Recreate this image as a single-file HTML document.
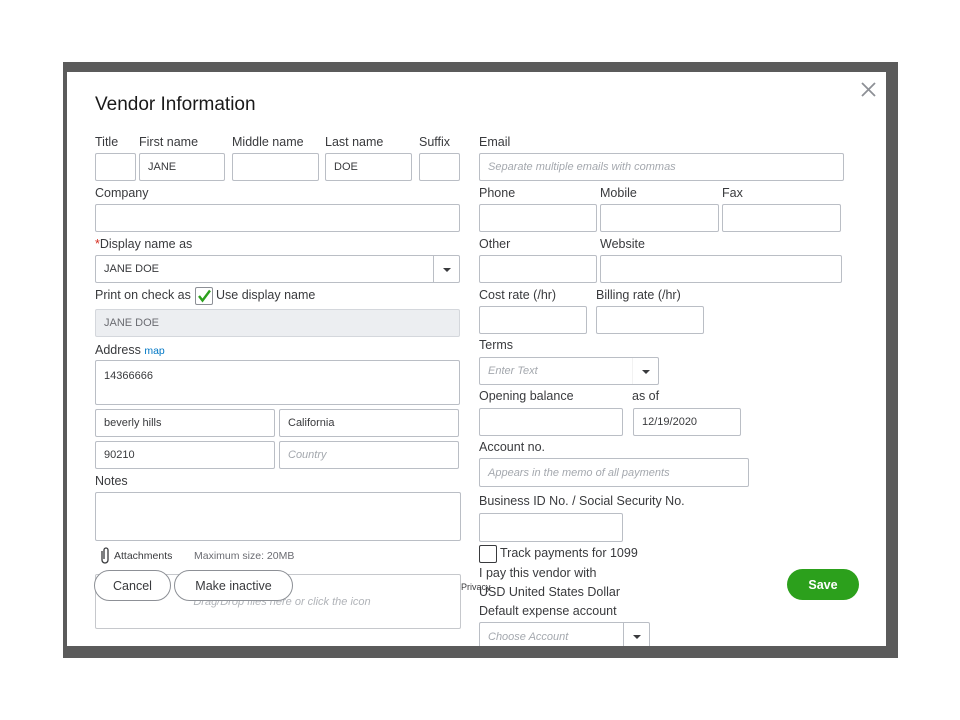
<!DOCTYPE html>
<html><head><meta charset="utf-8"><style>
*{box-sizing:border-box;margin:0;padding:0}
body{width:960px;height:720px;background:#fff;position:relative;overflow:hidden;font-family:"Liberation Sans",sans-serif;color:#393a3d}
.bd{position:absolute;left:63px;top:62px;width:835px;height:596px;background:#5b5b5b}
.m{position:absolute;left:67px;top:72px;width:819px;height:574px;background:#fff;overflow:hidden}
.l{position:absolute;font-size:12.5px;color:#393a3d;white-space:nowrap;line-height:14px}
.i{position:absolute;border:1px solid #babec5;border-radius:2px;background:#fff;font-size:11px;color:#393a3d;padding-left:8px;display:flex;align-items:center;white-space:nowrap}
.ph{color:#a4a8ae;font-style:italic}
.dd{position:absolute;top:0;bottom:0;width:26px;border-left:1px solid #babec5}
.dd:after{content:"";position:absolute;left:9px;top:12px;border:4px solid transparent;border-top:4px solid #393a3d}
.btn{position:absolute;border:1px solid #8d9096;border-radius:16px;background:#fff;font-size:12.5px;color:#393a3d;display:flex;align-items:center;justify-content:center}
</style></head><body>
<div class="bd"></div>
<div class="m">
<div class="l" style="left:28px;top:22px;font-size:19px;line-height:22px;color:#1a1a1a">Vendor Information</div>
<svg style="position:absolute;left:794px;top:10px" width="15" height="15"><path d="M1 1L14 14M14 1L1 14" stroke="#8d9096" stroke-width="1.8"/></svg>

<div class="l" style="left:28px;top:63px">Title</div>
<div class="l" style="left:72px;top:63px">First name</div>
<div class="l" style="left:165px;top:63px">Middle name</div>
<div class="l" style="left:258px;top:63px">Last name</div>
<div class="l" style="left:352px;top:63px">Suffix</div>
<div class="i" style="left:28px;top:81px;width:41px;height:28px"></div>
<div class="i" style="left:72px;top:81px;width:86px;height:28px">JANE</div>
<div class="i" style="left:165px;top:81px;width:87px;height:28px"></div>
<div class="i" style="left:258px;top:81px;width:87px;height:28px">DOE</div>
<div class="i" style="left:352px;top:81px;width:41px;height:28px"></div>

<div class="l" style="left:28px;top:114px">Company</div>
<div class="i" style="left:28px;top:132px;width:365px;height:28px"></div>
<div class="l" style="left:28px;top:165px"><span style="color:#d52b1e">*</span>Display name as</div>
<div class="i" style="left:28px;top:183px;width:365px;height:28px">JANE DOE<div class="dd" style="right:0"></div></div>
<div class="l" style="left:28px;top:216px">Print on check as</div>
<div style="position:absolute;left:128px;top:215px;width:18px;height:18px;border:1px solid #8d9096;border-radius:2px"><svg width="16" height="16"><path d="M3 8L6.5 12.5L14 2.5" stroke="#2ca01c" stroke-width="2.4" fill="none"/></svg></div>
<div class="l" style="left:149px;top:216px">Use display name</div>
<div class="i" style="left:28px;top:237px;width:365px;height:28px;background:#eceef1;border-color:#d4d7dc;color:#6b6c72">JANE DOE</div>
<div class="l" style="left:28px;top:271px">Address <span style="color:#0077c5;font-size:10.5px">map</span></div>
<div class="i" style="left:28px;top:288px;width:365px;height:45px;align-items:flex-start;padding-top:9px">14366666</div>
<div class="i" style="left:28px;top:337px;width:180px;height:28px">beverly hills</div>
<div class="i" style="left:212px;top:337px;width:180px;height:28px">California</div>
<div class="i" style="left:28px;top:369px;width:180px;height:28px">90210</div>
<div class="i" style="left:212px;top:369px;width:180px;height:28px"><span class="ph">Country</span></div>
<div class="l" style="left:28px;top:402px">Notes</div>
<div class="i" style="left:28px;top:420px;width:366px;height:49px"></div>
<svg style="position:absolute;left:32px;top:474px" width="12" height="18"><path d="M3 5V14a3 3 0 0 0 6 0V4a2 2 0 0 0-4 0V13" stroke="#393a3d" stroke-width="1.3" fill="none"/></svg>
<div class="l" style="left:47px;top:477px;font-size:10.5px">Attachments</div>
<div class="l" style="left:127px;top:477px;font-size:10.5px;color:#6b6c72">Maximum size: 20MB</div>
<div class="i" style="left:28px;top:502px;width:366px;height:55px;justify-content:center;border-color:#c6c8cc"><span class="ph" style="font-size:11px;color:#b0b3b8">Drag/Drop files here or click the icon</span></div>
<div class="btn" style="left:27px;top:498px;width:77px;height:31px">Cancel</div>
<div class="btn" style="left:107px;top:498px;width:119px;height:31px">Make inactive</div>
<div class="l" style="left:394px;top:508px;font-size:9px;color:#393a3d">Privacy</div>

<div class="l" style="left:412px;top:63px">Email</div>
<div class="i" style="left:412px;top:81px;width:365px;height:28px"><span class="ph">Separate multiple emails with commas</span></div>
<div class="l" style="left:412px;top:114px">Phone</div>
<div class="l" style="left:533px;top:114px">Mobile</div>
<div class="l" style="left:655px;top:114px">Fax</div>
<div class="i" style="left:412px;top:132px;width:118px;height:28px"></div>
<div class="i" style="left:533px;top:132px;width:119px;height:28px"></div>
<div class="i" style="left:655px;top:132px;width:119px;height:28px"></div>
<div class="l" style="left:412px;top:165px">Other</div>
<div class="l" style="left:533px;top:165px">Website</div>
<div class="i" style="left:412px;top:183px;width:118px;height:28px"></div>
<div class="i" style="left:533px;top:183px;width:242px;height:28px"></div>
<div class="l" style="left:412px;top:216px">Cost rate (/hr)</div>
<div class="l" style="left:529px;top:216px">Billing rate (/hr)</div>
<div class="i" style="left:412px;top:234px;width:108px;height:28px"></div>
<div class="i" style="left:529px;top:234px;width:108px;height:28px"></div>
<div class="l" style="left:412px;top:266px">Terms</div>
<div class="i" style="left:412px;top:285px;width:180px;height:28px"><span class="ph">Enter Text</span><div class="dd" style="right:0;border-left-color:#f2f2f2"></div></div>
<div class="l" style="left:412px;top:317px">Opening balance</div>
<div class="l" style="left:565px;top:317px">as of</div>
<div class="i" style="left:412px;top:336px;width:144px;height:28px"></div>
<div class="i" style="left:566px;top:336px;width:108px;height:28px">12/19/2020</div>
<div class="l" style="left:412px;top:368px">Account no.</div>
<div class="i" style="left:412px;top:386px;width:270px;height:29px"><span class="ph">Appears in the memo of all payments</span></div>
<div class="l" style="left:412px;top:422px">Business ID No. / Social Security No.</div>
<div class="i" style="left:412px;top:441px;width:144px;height:29px"></div>
<div style="position:absolute;left:412px;top:473px;width:18px;height:18px;border:1px solid #393a3d;border-radius:2px"></div>
<div class="l" style="left:433px;top:474px">Track payments for 1099</div>
<div class="l" style="left:412px;top:494px">I pay this vendor with</div>
<div class="l" style="left:412px;top:513px">USD United States Dollar</div>
<div class="l" style="left:412px;top:532px">Default expense account</div>
<div class="i" style="left:412px;top:550px;width:171px;height:30px"><span class="ph">Choose Account</span><div class="dd" style="right:0"></div></div>
<div style="position:absolute;left:720px;top:497px;width:72px;height:31px;border-radius:16px;background:#2ca01c;color:#fff;font-weight:bold;font-size:12.5px;display:flex;align-items:center;justify-content:center">Save</div>
</div>
</body></html>
